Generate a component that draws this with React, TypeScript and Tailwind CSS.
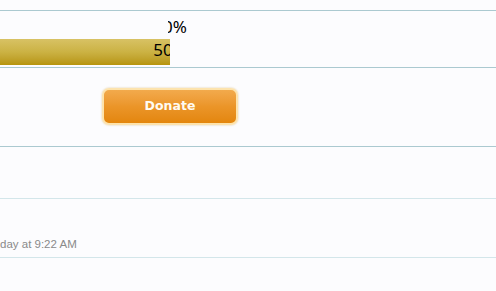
import React from "react";

export default function App() {
  return (
    <div className="w-[496px] h-[291px] overflow-hidden bg-[#fcfcfe] font-['Noto_Sans',sans-serif]">
      <div className="h-[10px]" />
      {/* progress row */}
      <div className="border-t border-[#abc9d0] h-[57px] flex">
        <div className="w-[340px] flex flex-col">
          <div className="mt-[6px] ml-[168px] w-[172px] overflow-hidden h-[20px]">
            <div className="-ml-[168px] w-[340px] text-center text-[17px] leading-[20px] text-black">50%</div>
          </div>
          <div className="mt-[2px] w-[170px] h-[26px] overflow-hidden bg-gradient-to-b from-[#d8c264] via-[#cbb243] to-[#b7950a]">
            <div className="w-[340px] text-center text-[17px] leading-[22px] text-black">50%</div>
          </div>
        </div>
      </div>
      {/* donate row */}
      <div className="border-t border-[#abc9d0] h-[79px] flex">
        <div className="w-[340px] flex justify-center pt-[20px]">
          <button className="w-[136px] h-[37px] rounded-[7px] border-2 border-[#fde3ad] shadow-[0_0_2px_rgba(200,160,80,0.6)] bg-gradient-to-b from-[#f2aa4c] via-[#eb9528] to-[#e3860c] text-[#fffbf2] font-['DejaVu_Sans',sans-serif] font-bold text-[12.5px] leading-none">
            Donate
          </button>
        </div>
      </div>
      {/* empty row */}
      <div className="border-t border-[#abc9d0] h-[52px]" />
      {/* time row */}
      <div className="border-t border-[#d3e6ea] h-[59px] flex items-end">
        <div className="pb-[6px] font-['Liberation_Sans',sans-serif] text-[11.5px] leading-[13px] text-[#8a8a8a]">
          day at 9:22 AM
        </div>
      </div>
      <div className="border-t border-[#d3e6ea] h-[34px]" />
    </div>
  );
}
